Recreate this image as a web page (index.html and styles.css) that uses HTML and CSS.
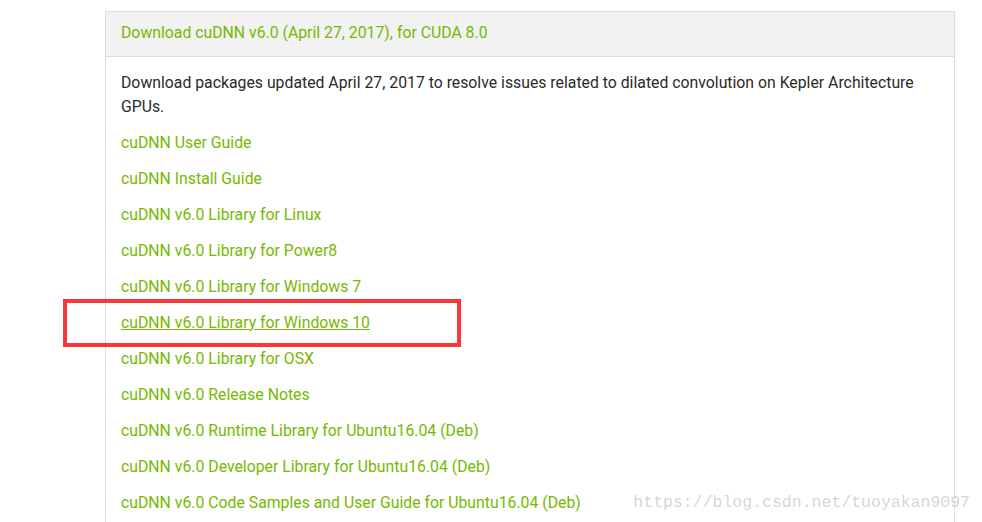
FILE: index.html
```html
<!DOCTYPE html>
<html lang="en">
<head>
    <meta charset="UTF-8">
    <title>cuDNN Download</title>
    <link rel="stylesheet" href="styles.css">
</head>
<body>
    <div class="page">
        <div class="panel">
            <div class="panel-heading">
                <a href="#">Download cuDNN v6.0 (April 27, 2017), for CUDA 8.0</a>
            </div>
            <div class="panel-body">
                <p class="note">Download packages updated April 27, 2017 to resolve issues related to dilated convolution on Kepler Architecture GPUs.</p>
                <p><a href="#">cuDNN User Guide</a></p>
                <p><a href="#">cuDNN Install Guide</a></p>
                <p><a href="#">cuDNN v6.0 Library for Linux</a></p>
                <p><a href="#">cuDNN v6.0 Library for Power8</a></p>
                <p><a href="#">cuDNN v6.0 Library for Windows 7</a></p>
                <p><a href="#" class="hover">cuDNN v6.0 Library for Windows 10</a></p>
                <p><a href="#">cuDNN v6.0 Library for OSX</a></p>
                <p><a href="#">cuDNN v6.0 Release Notes</a></p>
                <p><a href="#">cuDNN v6.0 Runtime Library for Ubuntu16.04 (Deb)</a></p>
                <p><a href="#">cuDNN v6.0 Developer Library for Ubuntu16.04 (Deb)</a></p>
                <p><a href="#">cuDNN v6.0 Code Samples and User Guide for Ubuntu16.04 (Deb)</a></p>
            </div>
        </div>
        <div class="mark"></div>
    </div>
    <div class="watermark">https://blog.csdn.net/tuoyakan9097</div>
</body>
</html>
```

FILE: styles.css
```css
html, body {
    margin: 0;
    padding: 0;
    background-color: #fff;
    height: 100%;
    overflow: hidden;
}
body {
    font-family: Roboto, "Liberation Sans", sans-serif;
    font-size: 15.8px;
    color: #2a2a2a;
}
a {
    color: #76b900;
    text-decoration: none;
}
.page {
    position: relative;
    padding: 11px 0 0 105px;
}
.panel {
    width: 848px;
    border: 1px solid #ddd;
    border-bottom: none;
}
.panel-heading {
    height: 44px;
    line-height: 42px;
    padding: 0 15px;
    background-color: #f2f2f2;
    border-bottom: 1px solid #ddd;
}
.panel-body {
    padding: 14px 15px 8px;
}
.panel-body p {
    margin: 0 0 12px;
    line-height: 24px;
}
.panel-body p:last-child {
    margin-bottom: 0;
}
.panel-body a.hover {
    text-decoration: underline;
}
.mark {
    position: absolute;
    left: 63px;
    top: 299px;
    width: 390px;
    height: 40px;
    border: 4px solid #f83838;
}
.watermark {
    position: absolute;
    right: 12px;
    bottom: 10px;
    font-family: "Liberation Mono", monospace;
    font-size: 16.5px;
    color: rgba(200, 200, 200, 0.75);
}
```
